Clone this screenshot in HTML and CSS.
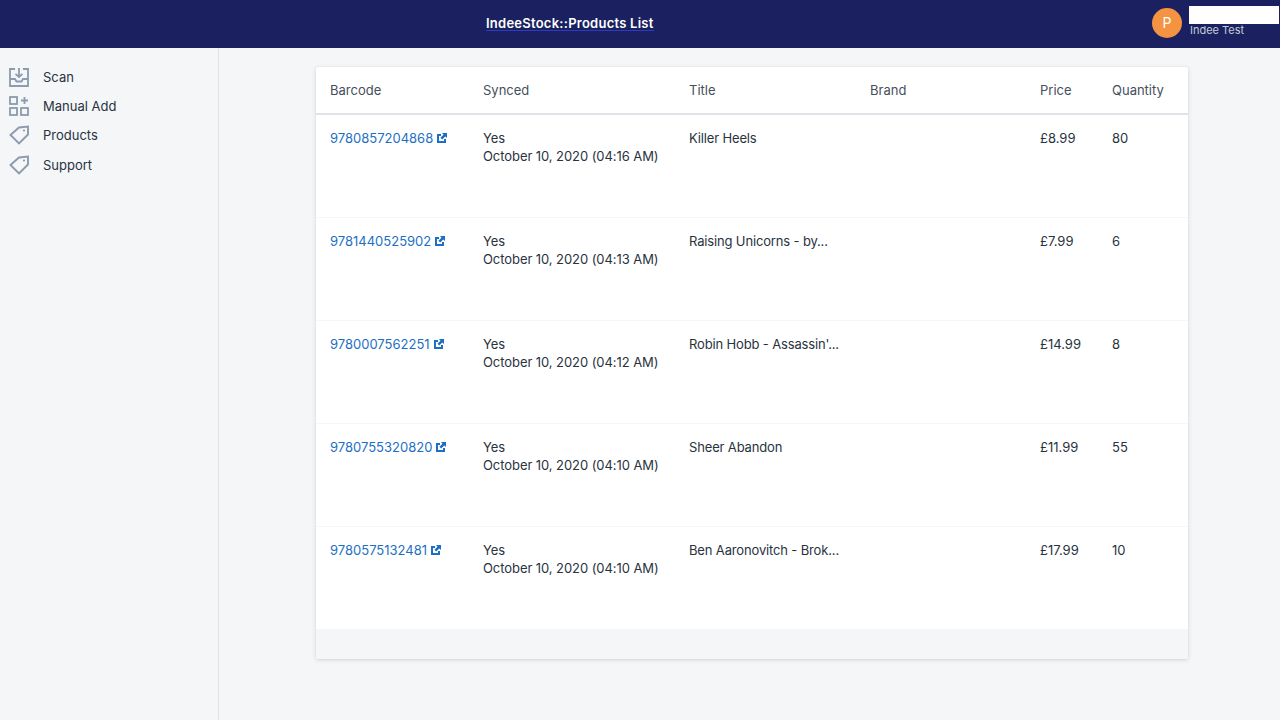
FILE: index.html
```html
<!DOCTYPE html>
<html lang="en">
<head>
<meta charset="utf-8">
<title>IndeeStock::Products List</title>
<link rel="stylesheet" href="styles.css">
</head>
<body>
<header class="topbar">
  <a class="brand" href="#">IndeeStock::Products List</a>
  <div class="user">
    <span class="avatar">P</span>
    <div class="user-info">
      <div class="user-name"></div>
      <div class="user-shop">Indee Test</div>
    </div>
  </div>
</header>
<div class="shell">
  <nav class="sidebar">
    <a class="nav-item" href="#">
      <svg class="nav-icon" viewBox="0 0 20 20" fill="none" stroke="#8c9bad" stroke-width="1.800"><path d="M6 2H1v17h18V2h-5"/><path d="M1 12h5l1.500 2.500h5L14 12h5"/><path d="M10 1v9M6.500 6.800 10 10l3.500-3.200"/></svg>
      <span>Scan</span>
    </a>
    <a class="nav-item" href="#">
      <svg class="nav-icon" viewBox="0 0 20 20" fill="none" stroke="#8c9bad" stroke-width="1.800"><rect x="1" y="1" width="7" height="7"/><rect x="1" y="12" width="7" height="7"/><rect x="12" y="12" width="7" height="7"/><path d="M15.500 1v7M12 4.500h7"/></svg>
      <span>Manual Add</span>
    </a>
    <a class="nav-item" href="#">
      <svg class="nav-icon" viewBox="0 0 20 20" fill="none" stroke="#8c9bad" stroke-width="1.900"><path d="M1.500 10 10 2.500l9-1V9.500L10 18.500z"/><circle cx="15" cy="5.500" r="1.100" fill="#8c9bad" stroke="none"/></svg>
      <span>Products</span>
    </a>
    <a class="nav-item" href="#">
      <svg class="nav-icon" viewBox="0 0 20 20" fill="none" stroke="#8c9bad" stroke-width="1.900"><path d="M1.500 10 10 2.500l9-1V9.500L10 18.500z"/><circle cx="15" cy="5.500" r="1.100" fill="#8c9bad" stroke="none"/></svg>
      <span>Support</span>
    </a>
  </nav>
  <main class="content">
    <section class="card">
      <table class="products">
        <thead>
          <tr>
            <th class="col-barcode">Barcode</th>
            <th class="col-synced">Synced</th>
            <th class="col-title">Title</th>
            <th class="col-brand">Brand</th>
            <th class="col-price">Price</th>
            <th class="col-qty">Quantity</th>
          </tr>
        </thead>
        <tbody>
          <tr>
            <td><a class="barcode" href="#">9780857204868<svg class="ext" viewBox="0 0 10 10"><path d="M0 1h4v2H2v5h5V6h2v4H0z"/><path d="M5 0h5v5L8.300 3.500 5.200 6.600 3.400 4.800 6.500 1.700z"/></svg></a></td>
            <td class="synced">Yes<br>October 10, 2020 (04:16 AM)</td>
            <td class="title">Killer Heels</td>
            <td></td>
            <td>£8.99</td>
            <td>80</td>
          </tr>
          <tr>
            <td><a class="barcode" href="#">9781440525902<svg class="ext" viewBox="0 0 10 10"><path d="M0 1h4v2H2v5h5V6h2v4H0z"/><path d="M5 0h5v5L8.300 3.500 5.200 6.600 3.400 4.800 6.500 1.700z"/></svg></a></td>
            <td class="synced">Yes<br>October 10, 2020 (04:13 AM)</td>
            <td class="title">Raising Unicorns - by...</td>
            <td></td>
            <td>£7.99</td>
            <td>6</td>
          </tr>
          <tr>
            <td><a class="barcode" href="#">9780007562251<svg class="ext" viewBox="0 0 10 10"><path d="M0 1h4v2H2v5h5V6h2v4H0z"/><path d="M5 0h5v5L8.300 3.500 5.200 6.600 3.400 4.800 6.500 1.700z"/></svg></a></td>
            <td class="synced">Yes<br>October 10, 2020 (04:12 AM)</td>
            <td class="title">Robin Hobb - Assassin'...</td>
            <td></td>
            <td>£14.99</td>
            <td>8</td>
          </tr>
          <tr>
            <td><a class="barcode" href="#">9780755320820<svg class="ext" viewBox="0 0 10 10"><path d="M0 1h4v2H2v5h5V6h2v4H0z"/><path d="M5 0h5v5L8.300 3.500 5.200 6.600 3.400 4.800 6.500 1.700z"/></svg></a></td>
            <td class="synced">Yes<br>October 10, 2020 (04:10 AM)</td>
            <td class="title">Sheer Abandon</td>
            <td></td>
            <td>£11.99</td>
            <td>55</td>
          </tr>
          <tr>
            <td><a class="barcode" href="#">9780575132481<svg class="ext" viewBox="0 0 10 10"><path d="M0 1h4v2H2v5h5V6h2v4H0z"/><path d="M5 0h5v5L8.300 3.500 5.200 6.600 3.400 4.800 6.500 1.700z"/></svg></a></td>
            <td class="synced">Yes<br>October 10, 2020 (04:10 AM)</td>
            <td class="title">Ben Aaronovitch - Brok...</td>
            <td></td>
            <td>£17.99</td>
            <td>10</td>
          </tr>
        </tbody>
      </table>
      <div class="card-footer"></div>
    </section>
  </main>
</div>
</body>
</html>
```
FILE: styles.css
```css
* { box-sizing: border-box; }
html, body { margin: 0; height: 100%; }
body {
  font-family: Inter, "Liberation Sans", sans-serif;
  font-size: 13px;
  line-height: 18px;
  color: #29333e;
  background: #f4f6f8;
  overflow: hidden;
}
.topbar {
  height: 48px;
  background: #1a2060;
  display: flex;
  align-items: center;
  padding-left: 486px;
  padding-right: 1px;
  justify-content: space-between;
}
.brand {
  color: #fff;
  font-weight: 600;
  font-size: 13px;
  letter-spacing: .25px;
  line-height: 13px;
  text-decoration: none;
  border-bottom: 1px solid #2a3cc0;
}
.user { display: flex; align-items: flex-start; gap: 7px; align-self: flex-start; padding-top: 6px; }
.avatar {
  width: 30px;
  height: 30px;
  margin-top: 2px;
  border-radius: 50%;
  background: #f49342;
  color: #fff;
  font-size: 14px;
  display: flex;
  align-items: center;
  justify-content: center;
}
.user-info { width: 90px; }
.user-name { height: 18px; background: #fff; }
.user-shop { color: #c4cdd5; font-size: 11px; line-height: 13px; padding: 0 0 0 1px; }
.shell { display: flex; height: 672px; }
.sidebar {
  width: 219px;
  flex: none;
  background: #f4f6f8;
  border-right: 1px solid #dfe3e8;
  padding-top: 14px;
}
.nav-item {
  display: flex;
  align-items: center;
  height: 29.300px;
  padding-left: 9px;
  color: #29333e;
  text-decoration: none;
  gap: 14px;
}
.nav-icon { width: 20px; height: 20px; flex: none; }
.content { flex: 1; padding: 19px 92px 0 97px; }
.card {
  background: #fff;
  border-radius: 2px;
  box-shadow: 0 0 0 1px rgba(63,63,68,.02), 0 1px 4px 0 rgba(63,63,68,.16);
  height: 592px;
  display: flex;
  flex-direction: column;
  overflow: hidden;
}
.products { width: 100%; border-collapse: collapse; table-layout: fixed; flex: none; }
.products th {
  height: 47px;
  padding: 0 0 0 14px;
  font-weight: 400;
  text-align: left;
  color: #454f5b;
  border-bottom: 2px solid #dfe3e8;
}
.col-barcode { width: 153px; }
.col-synced { width: 206px; }
.col-title { width: 181px; }
.col-brand { width: 170px; }
.col-price { width: 72px; }
.products td {
  height: 103px;
  padding: 14px 0 0 14px;
  vertical-align: top;
  border-bottom: 1px solid #f4f6f8;
  white-space: nowrap;
}
.products tbody tr:last-child td { border-bottom: 0; }
.synced { letter-spacing: -.07px; }
.title { letter-spacing: -.15px; }
.barcode { color: #1c6fc4; text-decoration: none; }
.ext { width: 10px; height: 10px; fill: #1c6fc4; margin-left: 4px; vertical-align: 0; }
.card-footer { flex: 1; background: #f4f6f8; }
```
